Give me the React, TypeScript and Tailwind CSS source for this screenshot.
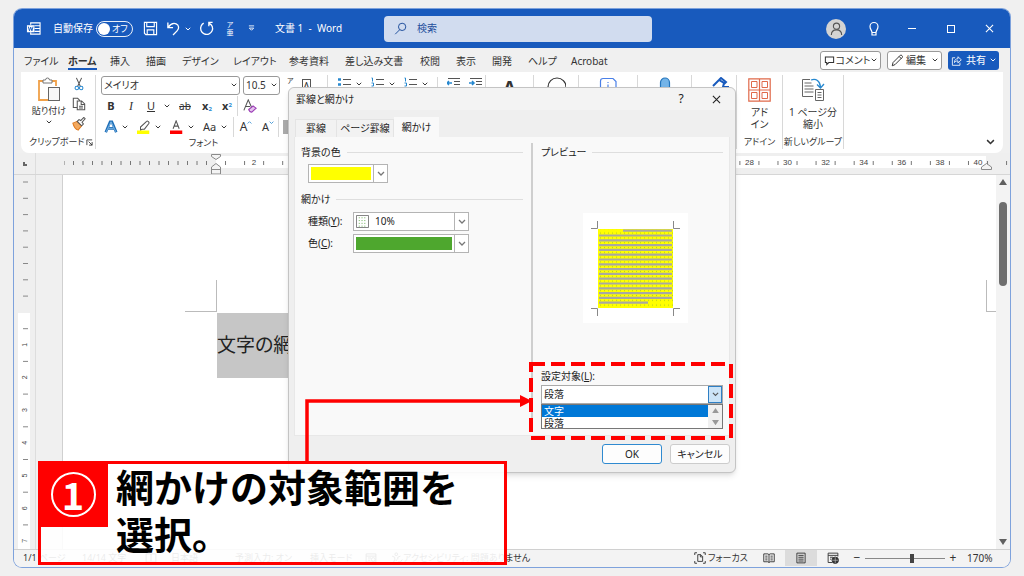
import { useState } from "react";
import type { ReactNode } from "react";
import clsx from "clsx";

const TABS = [
  { name: "ファイル", width: "w-11" },
  { name: "ホーム", width: "w-[42px]" },
  { name: "挿入", width: "w-9" },
  { name: "描画", width: "w-9" },
  { name: "デザイン", width: "w-[51px]" },
  { name: "レイアウト", width: "w-14" },
  { name: "参考資料", width: "w-14" },
  { name: "差し込み文書", width: "w-[75px]" },
  { name: "校閲", width: "w-9" },
  { name: "表示", width: "w-9" },
  { name: "開発", width: "w-9" },
  { name: "ヘルプ", width: "w-[43px]" },
  { name: "Acrobat", width: "w-12" },
];

const TARGETS = ["文字", "段落"];

function Chevron({ className = "w-[7px]" }: { className?: string }) {
  return (
    <svg viewBox="0 0 8 5" className={clsx("shrink-0", className)} fill="none" stroke="currentColor" strokeWidth="1.3">
      <path d="M1 1l3 3 3-3" />
    </svg>
  );
}

function Icon({ size = "size-4", box = 16, children }: { size?: string; box?: number; children: ReactNode }) {
  return (
    <svg viewBox={`0 0 ${box} ${box}`} className={clsx("shrink-0", size)} fill="none" stroke="currentColor" strokeWidth="1.2">
      {children}
    </svg>
  );
}

function TitleBar() {
  return (
    <header className="flex h-[39px] shrink-0 items-center bg-[#185abd] text-[10px] text-white">
      <div className="flex w-[370px] shrink-0 items-center pl-3">
        <Icon size="size-[15px]">
          <path d="M5 4V2h10v12H5v-2M9 5h6M9 8h6M9 11h6" />
          <rect x="1" y="4.5" width="8" height="7.5" fill="#fff" stroke="none" />
          <path d="M2.5 6l1.2 4.5L5 6.5l1.3 4L7.500 6" stroke="#185abd" strokeWidth="1" />
        </Icon>
        <label htmlFor="autosave" className="ml-3 w-[39px] whitespace-nowrap">自動保存</label>
        <div className="ml-1 flex h-4 w-[37px] shrink-0 items-center rounded-full border border-white/90 pl-px">
          <input id="autosave" type="checkbox" role="switch" className="size-3 shrink-0 appearance-none rounded-full bg-white" />
          <span className="ml-0.5 text-[9px] whitespace-nowrap">オフ</span>
        </div>
        <button type="button" aria-label="上書き保存" className="ml-2.5">
          <Icon size="size-[15px]">
            <path d="M1.500 1.500h13v13H3l-1.500-1.500zM4 1.500v4.500h8V1.500M4.500 14.500V9.500h7v5" />
          </Icon>
        </button>
        <button type="button" aria-label="元に戻す" className="ml-2 flex items-center gap-1">
          <Icon size="size-[15px]">
            <path d="M2 1.500v5.500h5.500M2.300 6.700C5 3 8 1.800 10.800 3c3.200 1.500 3.500 5 1 7.500L7.500 15" strokeWidth="1.400" />
          </Icon>
          <Chevron className="w-[6px]" />
        </button>
        <button type="button" aria-label="やり直し" className="ml-2">
          <Icon size="size-[15px]">
            <path d="M10.500 5.500V1.500h4M11 2.500C14 4 15.300 7.500 14 10.500c-1.500 3.300-5.300 4.700-8.500 3.300C2.200 12.300.8 8.500 2.300 5.300 2.900 4 3.800 3 5 2.300" strokeWidth="1.400" />
          </Icon>
        </button>
        <button type="button" aria-label="ふりがな" className="ml-2.5 flex w-3 flex-col items-center text-[7px] leading-[8px]">
          <span>ア</span>
          <span>亜</span>
        </button>
        <button type="button" aria-label="クイック アクセス ツール バーの設定" className="ml-3">
          <svg viewBox="0 0 8 7" className="w-[7px]" fill="none" stroke="currentColor">
            <path d="M1 1h6M1.500 3.500L4 6l2.500-2.500z" />
          </svg>
        </button>
        <span className="ml-5 whitespace-pre text-[10px]">文書 1  -  Word</span>
      </div>
      <label className="flex h-[26px] w-[268px] shrink-0 items-center gap-2.5 rounded-sm bg-[#d1dcef] pl-2.5 text-[#1f4e9c]">
        <Icon size="size-[13px]">
          <circle cx="10" cy="6" r="4.500" />
          <path d="M7 9.500L1.500 15" />
        </Icon>
        <input type="search" aria-label="検索" placeholder="検索" className="min-w-0 flex-1 bg-transparent outline-none placeholder:text-[#1f4e9c]" />
      </label>
      <div className="ml-auto flex items-center pr-[15px]">
        <button type="button" aria-label="アカウント" className="flex size-5 items-center justify-center rounded-full bg-[#d3d3d3] text-[#555]">
          <Icon size="size-[15px]">
            <circle cx="8" cy="5.500" r="3.300" />
            <path d="M2.500 15c0-3.500 2-5.500 5.500-5.500s5.500 2 5.500 5.500" />
          </Icon>
        </button>
        <button type="button" aria-label="ヒント" className="ml-5">
          <Icon>
            <path d="M6 11.500C6 9.500 4 8.500 4 5.500 4 3.300 5.800 1.500 8 1.500s4 1.800 4 4c0 3-2 4-2 6zM6 11.500v2.500h4v-2.500" />
          </Icon>
        </button>
        <button type="button" aria-label="最小化" className="ml-6 flex w-3 justify-center">
          <span className="h-px w-2 bg-white" />
        </button>
        <button type="button" aria-label="最大化" className="ml-[27px] flex w-3 justify-center">
          <span className="size-2 border border-white" />
        </button>
        <button type="button" aria-label="閉じる" className="ml-[26px] flex w-3 justify-center">
          <Icon size="size-[9px]" box={10}><path d="M1 1l8 8M9 1L1 9" /></Icon>
        </button>
      </div>
    </header>
  );
}

function TabRow() {
  const [active, setActive] = useState("ホーム");
  return (
    <div className="flex h-6 shrink-0 items-center bg-[#f0f0f0] pr-[11px] pl-2.5 text-[10px]">
      <nav className="flex">
        {TABS.map((t) => (
          <button
            key={t.name}
            type="button"
            onClick={() => setActive(t.name)}
            className={clsx("shrink-0 text-left whitespace-nowrap", t.width)}
          >
            <span className={clsx("inline-block border-b-2 pt-1 leading-[14px]", active === t.name ? "border-[#185abd] font-bold" : "border-transparent")}>
              {t.name}
            </span>
          </button>
        ))}
      </nav>
      <div className="ml-auto flex gap-1.5">
        <button type="button" className="flex h-[19px] w-[61px] items-center justify-center gap-px rounded-[3px] border border-[#999] bg-white whitespace-nowrap">
          <Icon size="size-[11px]"><path d="M2 3h12v8H7l-3 3v-3H2z" strokeWidth="1.500" /></Icon>
          コメント
          <Chevron className="w-[6px]" />
        </button>
        <button type="button" className="flex h-[19px] w-[55px] items-center justify-center gap-0.5 rounded-[3px] border border-[#999] bg-white whitespace-nowrap">
          <Icon size="size-[13px]"><path d="M1.500 14.500l1-4 9-9c1-1 3.500 1.500 2.500 2.500l-9 9zM10 3l3 3" /></Icon>
          編集
          <Chevron className="ml-1 w-[6px]" />
        </button>
        <button type="button" className="flex h-[19px] w-[51px] items-center justify-center gap-1 rounded-[3px] bg-[#185abd] whitespace-nowrap text-white">
          <Icon size="size-[11px]">
            <path d="M6 4H2v11h11v-4M5 11c0-4 2-5.500 5-5.500V2.500L15 7l-5 4.500V8.500C8 8.500 6.500 9 5 11z" />
          </Icon>
          共有
          <Chevron className="w-[6px]" />
        </button>
      </div>
    </div>
  );
}

function Group({ label, width, children }: { label?: string; width: string; children: ReactNode }) {
  return (
    <section className={clsx("flex shrink-0 flex-col border-r border-[#d8d8d8]", width)}>
      <div className="h-[61px]">{children}</div>
      {label && <div className="text-center text-[9px] leading-[14px] whitespace-nowrap">{label}</div>}
    </section>
  );
}

function Divider() {
  return <span className="h-5 w-px shrink-0 bg-[#d8d8d8]" />;
}

function ClipboardGroup() {
  return (
    <section className="flex w-[75px] shrink-0 flex-col border-r border-[#d8d8d8]">
      <div className="flex h-[61px]">
        <button type="button" className="flex w-12 flex-col items-center pl-2 text-[9px] leading-[14px] whitespace-nowrap">
          <svg viewBox="0 0 24 26" className="mt-0.5 mb-px w-6" fill="none">
            <path d="M6 4H2v19h9M15 4h4v5" stroke="#f0a048" strokeWidth="1.800" />
            <path d="M6 3h2.500a2 2 0 014 0H15v3H6z" stroke="#777" fill="#fff" />
            <rect x="11.500" y="10.500" width="11" height="13" stroke="#666" fill="#f7f7f7" />
          </svg>
          貼り付け
          <Chevron className="mt-0.5 w-[6px]" />
        </button>
        <div className="flex w-5 flex-col items-center gap-1.5 pt-0.5">
          <button type="button" aria-label="切り取り">
            <Icon size="size-[14px]">
              <path d="M5 1l4.500 9.500M11 1L6.500 10.500" stroke="#555" />
              <circle cx="5.500" cy="12.500" r="2" stroke="#2788cf" />
              <circle cx="10.500" cy="12.500" r="2" stroke="#2788cf" />
            </Icon>
          </button>
          <button type="button" aria-label="コピー">
            <Icon size="size-[14px]">
              <path d="M6 12H1.500V1.500h5L9 4M6 4.500h5l3.500 3.500v6.500H6zM10.500 4.500V8.500h4M8 10.500h4.500M8 12.500h4.500" stroke="#555" />
            </Icon>
          </button>
          <button type="button" aria-label="書式のコピー">
            <Icon size="size-[14px]">
              <path d="M1 7l5-2 5 5-4 5c-3-1-5-4-6-8z" fill="#f3a95f" stroke="#e07b20" />
              <path d="M6 5l2-2 2 1 3.500-3.500 1.500 1.500L11.500 6l1.500 2-2 2z" fill="#fff" stroke="#555" />
            </Icon>
          </button>
        </div>
      </div>
      <div className="flex items-center justify-between pr-0.5 pl-2 text-[9px] leading-[14px] whitespace-nowrap">
        クリップボード
        <Icon size="size-[7px]" box={8}><path d="M1 7V1h6M3 3l4 4M7 3.500V7H3.500" strokeWidth="1" /></Icon>
      </div>
    </section>
  );
}

function FontGroup() {
  return (
    <Group label="フォント" width="w-[232px] pr-4">
      <div className="flex flex-col gap-px pl-[5px]">
        <div className="flex items-center gap-[3px]">
          <span className="flex h-[19px] w-[139px] shrink-0 items-center rounded-[3px] border border-[#999] px-0.5">
            <select aria-label="フォント名" className="min-w-0 flex-1 appearance-none bg-transparent text-[10px] outline-none">
              <option>メイリオ</option>
            </select>
            <Chevron className="w-[6px]" />
          </span>
          <span className="flex h-[19px] w-[37px] shrink-0 items-center rounded-[3px] border border-[#999] px-0.5">
            <select aria-label="フォント サイズ" className="min-w-0 flex-1 appearance-none bg-transparent text-[10px] outline-none">
              <option>10.5</option>
            </select>
            <Chevron className="w-[6px]" />
          </span>
          <span className="ml-1 w-3 self-start pt-0.5 text-[7px] leading-[8px]">ア</span>
          <span className="mt-1 ml-1 flex h-4 w-[13px] items-start justify-center border border-[#555] text-[10px] leading-3">A</span>
        </div>
        <div className="flex h-5 items-center text-[11px]">
          <button type="button" className="w-5 font-bold">B</button>
          <button type="button" className="w-5 font-['Liberation_Serif'] text-xs italic">I</button>
          <button type="button" className="w-5 underline">U</button>
          <button type="button" aria-label="下線の種類" className="flex w-3 justify-center"><Chevron className="w-[6px]" /></button>
          <button type="button" className="w-6 text-[10px] line-through">ab</button>
          <button type="button" aria-label="下付き" className="w-5 font-bold">x<sub className="text-[6px] text-[#2788cf]">2</sub></button>
          <button type="button" aria-label="上付き" className="w-5 font-bold">x<sup className="text-[6px] text-[#2788cf]">2</sup></button>
          <Divider />
          <button type="button" aria-label="書式のクリア" className="flex w-6 justify-center">
            <Icon size="size-[14px]">
              <path d="M1 13L6 1l4 9M3 8.500h5" stroke="#555" />
              <path d="M6.500 12l5-4 3.500 2.500-5 4.500c-1.500 0-3-1.500-3.500-3z" fill="#e5c3ee" stroke="#9b3db5" />
            </Icon>
          </button>
        </div>
        <div className="flex h-5 items-center">
          <div className="flex gap-[9px] pl-[3px]">
            <button type="button" aria-label="文字の効果" className="flex w-6 items-center justify-between">
              <Icon size="size-[14px]">
                <path d="M2 14L7 2h2l5 12M4.500 9.500h7" stroke="#1f6fb8" strokeWidth="3" />
                <path d="M2.500 13.500L8 2l5.500 11.500M5 9.500h6" stroke="#9fd0f5" strokeWidth=".8" />
              </Icon>
              <Chevron className="w-[6px]" />
            </button>
            <button type="button" aria-label="蛍光ペンの色" className="flex w-6 items-center justify-between">
              <Icon size="size-[14px]">
                <path d="M4 10V8l7-6.500c1-1 3.500 1 2.500 2.500l-5 6.500H6l-2 1z" stroke="#555" />
                <path d="M0 14h14" stroke="#ff0" strokeWidth="4" />
              </Icon>
              <Chevron className="w-[6px]" />
            </button>
            <button type="button" aria-label="フォントの色" className="flex w-6 items-center justify-between">
              <Icon size="size-[14px]">
                <path d="M3.500 10L7 1l3.500 9M5 7h4" stroke="#555" />
                <path d="M0 14h14" stroke="#f00" strokeWidth="4" />
              </Icon>
              <Chevron className="w-[6px]" />
            </button>
            <button type="button" aria-label="文字種の変換" className="flex w-6 items-center justify-between text-[11px]">
              Aa
              <Chevron className="w-[6px]" />
            </button>
          </div>
          <span className="ml-1.5 flex"><Divider /></span>
          <button type="button" aria-label="フォント サイズの拡大" className="flex w-6 justify-center text-xs">
            A<Chevron className="mt-0.5 w-[5px] rotate-180 self-start text-[#2788cf]" />
          </button>
          <button type="button" aria-label="フォント サイズの縮小" className="flex w-5 justify-center text-[11px]">
            A<Chevron className="mt-0.5 w-[5px] self-start text-[#2788cf]" />
          </button>
          <Divider />
          <span className="ml-1 h-3.5 w-3.5 bg-[#ababab]" />
        </div>
      </div>
    </Group>
  );
}

function ListIcon({ numbered }: { numbered?: boolean }) {
  return (
    <span className="flex w-6 items-center justify-between">
      <svg viewBox="0 0 13 14" className="w-[13px]" fill="none" stroke="#555">
        <path d="M5 2.500h8M5 7.500h8M5 12.500h8" />
        <path d={numbered ? "M.5 1h1v3.500M.5 6h2v3h-2M.5 11h2v3" : "M0 2.500h3M0 7.500h3M0 12.500h3"} stroke="#2788cf" strokeWidth={numbered ? 1 : 2.500} />
      </svg>
      <Chevron className="w-[6px]" />
    </span>
  );
}

function IndentIcon({ flip }: { flip?: boolean }) {
  return (
    <svg viewBox="0 0 13 14" className="w-[13px]" fill="none" stroke="#555">
      <path d="M1 1.500h12M7 4.500h6M7 7.500h6M1 11.500h12" />
      <path d={flip ? "M0 6h5M3 4l2 2-2 2" : "M5 6H0M2 4L0 6l2 2"} stroke="#2788cf" strokeWidth="1.500" />
    </svg>
  );
}

function Ribbon() {
  return (
    <div className="mx-[7px] flex h-[81px] shrink-0 rounded-b-lg bg-white pt-[3px] pb-1 text-[#333]">
      <ClipboardGroup />
      <FontGroup />
      <Group width="w-[158px]">
        <div className="flex items-start gap-[9px] pt-0.5 pl-2.5">
          <ListIcon />
          <ListIcon numbered />
          <ListIcon numbered />
          <Divider />
          <IndentIcon />
          <IndentIcon flip />
        </div>
      </Group>
      <Group width="w-12">
        <div className="text-center text-lg leading-6 font-bold">A</div>
      </Group>
      <Group width="w-[45px]">
        <Icon size="mx-auto mt-0.5 size-5" box={20}><circle cx="11" cy="10" r="9" /></Icon>
      </Group>
      <Group width="w-[59px]">
        <Icon size="mx-auto mt-0.5 size-5" box={20}>
          <path d="M2.500 12V4q0-2.500 2.500-2.500h10l3 3V14M10 5v1M10 7.500v4" stroke="#4a80e8" />
        </Icon>
      </Group>
      <Group width="w-[54px]">
        <Icon size="mx-auto mt-0.5 size-5" box={20}>
          <rect x="5.500" y="1" width="9" height="14" rx="4.500" fill="#74b4e8" stroke="#2576bd" />
        </Icon>
      </Group>
      <Group width="w-[45px]">
        <Icon size="ml-5 mt-0.5 size-5" box={20}>
          <path d="M1 9l6-6 5 3-1 4h6M7 3l2-2 5 4-2 2" stroke="#185abd" strokeWidth="2" />
        </Icon>
      </Group>
      <Group width="w-[46px]" label="アドイン">
        <button type="button" className="flex w-full flex-col items-center text-[10px] leading-3">
          <svg viewBox="0 0 23 24" className="mt-[3px] mb-1 w-[23px]" fill="none" stroke="#e0694a">
            <path d="M.8.8h21.400v22.400H.8zM11.500.8v22.400M.8 12h21.400" strokeWidth="1.200" />
            <path d="M3.500 3.500h5.500v6H3.500zM14 3.500h5.500v6H14zM3.500 14.500h5.500v6H3.500zM14 14.500h5.500v6H14z" />
          </svg>
          アド
          <br />
          イン
        </button>
      </Group>
      <Group width="w-[61px]" label="新しいグループ">
        <button type="button" className="flex w-full flex-col items-center text-[10px] leading-3 whitespace-nowrap">
          <svg viewBox="0 0 24 24" className="mt-[3px] mb-1 w-6" fill="none" stroke="#666">
            <path d="M9 1.500H1.500v17H12M3.500 5h7M3.500 8h9M3.500 11h9M3.500 14h9" />
            <path d="M14.500 11.500h8v11h-8zM16.500 14.500h4M16.500 17h4M16.500 19.500h4" />
            <path d="M10 2c5-2 9 1 9.500 7M16 6.500l3.500 3.500L23 6" stroke="#2788cf" strokeWidth="1.300" />
          </svg>
          1 ページ分
          <br />
          縮小
        </button>
      </Group>
      <button type="button" aria-label="リボンを折りたたむ" className="mt-auto mr-2 mb-1 ml-auto">
        <Chevron className="w-[9px]" />
      </button>
    </div>
  );
}

// Horizontal ruler: one character is 19.05px, zero sits on the left margin.
function HorizontalRuler() {
  const unit = 19.05;
  const left = Array.from({ length: 16 }, (_, i) => 152 - (i + 1) * 9.500);
  const right = Array.from({ length: 42 }, (_, i) => 152 + (i + 0.5) * unit);
  const numbers = Array.from({ length: 20 }, (_, i) => (i + 1) * 2);
  return (
    <div className="flex h-[22px] shrink-0 overflow-hidden border-b border-[#d6d6d6] bg-[#efefef]">
      <div className="flex w-[22px] shrink-0 items-center justify-center border-r border-[#ddd]">
        <span className="size-1 border-b-2 border-l-2 border-[#666]" />
      </div>
      <svg viewBox="0 0 960 22" className="ml-7 h-[22px] w-[960px] shrink-0" fill="none">
        <rect x="152" y="3" width="770" height="12" fill="#fff" />
        {[...left, ...right].map((x) => (
          <path key={x} d={`M${x} 8v4`} stroke="#777" />
        ))}
        {numbers.map((n) => (
          <text key={n} x={152 + n * unit} y="12" fontSize="8" textAnchor="middle" fill="#444" className="font-['Liberation_Sans']">
            {n}
          </text>
        ))}
        <path d="M147.500 1.500h9v2l-4.500 3-4.500-3zM152 10.500l4.500 3.500v7h-9v-7zM147.500 16.500h9" fill="#f4f4f4" stroke="#8a8a8a" />
        <path d="M922.500 10.500l5 3.500v2.500h-10V14z" fill="#f4f4f4" stroke="#8a8a8a" />
      </svg>
    </div>
  );
}

function VerticalRuler() {
  const ticks = Array.from({ length: 8 }, (_, i) => 7 + i * 16.300);
  return (
    <div className="w-[22px] shrink-0 overflow-hidden border-r border-[#ddd] bg-[#efefef]">
      <svg viewBox="0 0 20 374" className="h-[374px] w-5" fill="none">
        <rect x="4" y="138" width="12" height="240" fill="#fff" />
        {ticks.map((y) => (
          <path key={y} d={`M9 ${y}h5`} stroke="#888" />
        ))}
        {[1, 2, 3, 4, 5, 6, 7].map((n) => (
          <g key={n}>
            <path d={`M9 ${137 + n * 32.700 - 16}h5`} stroke="#888" />
            <text fontSize="7" fill="#444" textAnchor="middle" transform={`translate(13 ${137 + n * 32.700}) rotate(-90)`} className="font-['Liberation_Sans']">
              {n}
            </text>
          </g>
        ))}
      </svg>
    </div>
  );
}

function DocumentArea() {
  return (
    <div className="flex min-h-0 flex-1">
      <VerticalRuler />
      <main className="ml-[26px] flex-1 overflow-hidden border-l border-[#d0d0d0] bg-white pt-[105px]">
        <div className="flex h-8 justify-between">
          <span className="ml-[122px] w-8 border-r border-b border-[#bbb]" />
          <span className="w-2.5 border-b border-l border-[#bbb]" />
        </div>
        <p className="mt-px ml-[154px] h-[65px] w-48 bg-[#c6c6c6] text-[19px] leading-[64px] text-[#222]">文字の網かけ</p>
      </main>
      <div className="flex w-3.5 shrink-0 flex-col items-center bg-[#f3f3f3] py-1">
        <svg viewBox="0 0 8 6" className="w-2" fill="#606060"><path d="M4 0l4 6H0z" /></svg>
        <span className="mt-[17px] h-[84px] w-2 rounded-full bg-[#6e6e6e]" />
        <svg viewBox="0 0 8 6" className="mt-auto w-2" fill="#606060"><path d="M4 6l4-6H0z" /></svg>
      </div>
    </div>
  );
}

function StatusBar() {
  const [zoom, setZoom] = useState(59);
  return (
    <footer className="flex h-[18px] shrink-0 items-center border-t border-[#d0d0d0] bg-[#f3f3f3] pr-[15px] pb-px pl-[9px] text-[9px] whitespace-nowrap text-[#333]">
      <span className="w-[59px]">1/1 ページ</span>
      <span className="w-[63px]">14/14 文字</span>
      <span className="w-[26px]"><Icon size="size-3"><path d="M1.500 2.500h5L8 4l1.500-1.500h5v11h-13zM8 4v8" /></Icon></span>
      <span className="w-16">日本語</span>
      <span className="w-[75px]">予測入力: オン</span>
      <span className="w-[55px]">挿入モード</span>
      <span className="w-[26px]"><Icon size="size-3"><path d="M1.500 2.500h13v11h-13zM1.500 5.500h13M4 8h4M4 11h3" /><circle cx="11" cy="10" r="2.500" /></Icon></span>
      <Icon size="size-3">
        <circle cx="7" cy="3" r="1.800" />
        <path d="M1.500 5.500L5 7v3l-2 4.500M12.500 5.500L9 7v3M7 10v2M10 12l2 2 3-4" />
      </Icon>
      <span>アクセシビリティ: 問題ありません</span>
      <div className="ml-auto flex h-full items-center">
        <button type="button" className="flex w-[59px] items-center gap-0.5">
          <Icon size="size-3">
            <path d="M1 4V1h3M12 1h3v3M15 12v3h-3M4 15H1v-3M5 3.500h4l2.500 2.500v6.500H5zM8.500 3.500v3h3" strokeWidth="1.200" />
          </Icon>
          フォーカス
        </button>
        <button type="button" aria-label="閲覧モード" className="flex w-8 justify-center">
          <Icon size="size-3"><path d="M1 2.500h5.500L8 3.500l1.500-1h5.500v10.500H9.500L8 14l-1.500-1H1zM8 3.500V14M3 5.500h3M3 8h3M3 10.500h3M10 5.500h3M10 8h3M10 10.500h3" /></Icon>
        </button>
        <button type="button" aria-label="印刷レイアウト" className="flex h-full w-8 items-center justify-center bg-[#dcdcdc]">
          <Icon size="size-3"><path d="M2.500 1.500h11v13h-11zM4.500 4.500h7M4.500 7h7M4.500 9.500h7M4.500 12h7" /></Icon>
        </button>
        <button type="button" aria-label="Web レイアウト" className="flex w-8 justify-center">
          <Icon size="size-3">
            <path d="M7 14H1.500V1.500h13V6M1.500 4.500h13M4 7h4M4 9.500h2" />
            <circle cx="11" cy="11" r="4.300" fill="#333" />
            <path d="M7 11h8M11 7v8" stroke="#ccc" strokeWidth=".8" />
          </Icon>
        </button>
        <button type="button" className="w-4 text-xs">−</button>
        <input
          type="range"
          aria-label="ズーム"
          value={zoom}
          onChange={(e) => setZoom(Number(e.target.value))}
          className="h-3 w-20 appearance-none bg-transparent [&::-webkit-slider-runnable-track]:h-px [&::-webkit-slider-runnable-track]:bg-[#888] [&::-webkit-slider-thumb]:-mt-1 [&::-webkit-slider-thumb]:h-[9px] [&::-webkit-slider-thumb]:w-1 [&::-webkit-slider-thumb]:appearance-none [&::-webkit-slider-thumb]:bg-[#444]"
        />
        <button type="button" className="w-4 text-xs">+</button>
        <span className="ml-1.5 w-7 text-[10px]">170%</span>
      </div>
    </footer>
  );
}

function SectionTitle({ children }: { children: ReactNode }) {
  return (
    <h3 className="flex items-center gap-1.5 text-[10px] leading-4 whitespace-nowrap">
      {children}
      <span className="h-px flex-1 bg-[#dedede]" />
    </h3>
  );
}

function Combo({ id, width, fill, label, children }: { id: string; width: string; fill?: string; label?: string; children?: ReactNode }) {
  return (
    <span className={clsx("flex h-[19px] items-stretch border border-[#b4b4b4] bg-white", width)}>
      {children}
      <select id={id} aria-label={label} className={clsx("min-w-0 flex-1 appearance-none text-[10px] outline-none", fill ? `m-0.5 ${fill}` : "pl-1")}>
        <option>{fill ? "" : "10%"}</option>
      </select>
      <span className="flex w-3.5 items-center justify-center border-l border-[#b4b4b4] text-[#777]">
        <Chevron className="w-[8px]" />
      </span>
    </span>
  );
}

function Preview() {
  const bars = Array.from({ length: 14 }, (_, i) => 22.500 + i * 4.800);
  return (
    <svg viewBox="0 0 105 110" className="w-[105px] bg-white" fill="none">
      <defs>
        <pattern id="dots" x="16" y="17.700" width="4" height="4.800" patternUnits="userSpaceOnUse">
          <rect x="1" y="1.800" width="1" height="1.200" fill="#b9d21a" />
        </pattern>
      </defs>
      <rect x="15" y="16" width="75" height="79" fill="#ff0" />
      <rect x="15" y="16" width="75" height="79" fill="url(#dots)" />
      <path d="M40 17.700h49M16 89.700h49" stroke="#a9a9a0" strokeWidth="2.200" />
      {bars.map((y) => (
        <path key={y} d={`M16 ${y}h73`} stroke="#a9a9a0" strokeWidth="2.200" />
      ))}
      <path d="M8 15.500h6.500V8M97 15.500h-6.500V8M8 95.500h6.500v7.500M97 95.500h-6.500v7.500" stroke="#888" />
    </svg>
  );
}

function TargetPicker() {
  const [target, setTarget] = useState("段落");
  return (
    <div className="w-[182px] text-[10px]">
      <label htmlFor="target" className="leading-[18px]">設定対象(<u>L</u>):</label>
      <div className="flex h-[19px] border border-[#aaa] bg-white">
        <select
          id="target"
          value={target}
          onChange={(e) => setTarget(e.target.value)}
          className="min-w-0 flex-1 appearance-none pl-0.5 outline-none"
        >
          {TARGETS.map((t) => (
            <option key={t}>{t}</option>
          ))}
        </select>
        <span className="flex w-3.5 items-center justify-center border border-[#2f7fc4] bg-[#cce4f7] text-[#555]"><Chevron className="w-[7px]" /></span>
      </div>
      <div className="flex h-[25px] border border-[#777] bg-white">
        <ul role="listbox" aria-label="設定対象" className="flex-1 leading-3">
          <li role="option" aria-selected="true" className="h-3 bg-[#0078d7] pl-0.5 text-white">文字</li>
          <li role="option" aria-selected="false" className="h-3 pl-0.5">段落</li>
        </ul>
        <div className="flex w-3.5 flex-col items-center justify-around bg-[#f0f0f0]">
          <svg viewBox="0 0 8 6" className="w-[7px]" fill="#999"><path d="M4 0l4 6H0z" /></svg>
          <svg viewBox="0 0 8 6" className="w-[7px]" fill="#999"><path d="M4 6l4-6H0z" /></svg>
        </div>
      </div>
    </div>
  );
}

function ShadingDialog() {
  return (
    <div
      role="dialog"
      aria-label="罫線と網かけ"
      className="absolute top-[87px] left-[288px] flex h-[386px] w-[448px] flex-col rounded-md border border-[#c4c4c4] bg-[#efefef] text-[10px] text-[#222] shadow-md"
    >
      <div className="flex h-[22px] shrink-0 items-center rounded-t-md bg-[#f3f3f3] pl-[7px]">
        <h2>罫線と網かけ</h2>
        <button type="button" className="ml-auto w-5 text-xs">?</button>
        <button type="button" aria-label="閉じる" className="mr-3.5 ml-5 flex w-2.5 justify-center">
          <Icon size="size-[9px]" box={10}><path d="M1 1l8 8M9 1L1 9" /></Icon>
        </button>
      </div>
      <div role="tablist" className="mt-[7px] flex h-5 shrink-0 items-end pl-1.5">
        <button role="tab" type="button" className="h-[18px] w-[42px] border border-b-0 border-[#e4e4e4] bg-[#f2f2f2]">罫線</button>
        <button role="tab" type="button" className="h-[18px] w-[57px] border border-b-0 border-l-0 border-[#e4e4e4] bg-[#f2f2f2] whitespace-nowrap">ページ罫線</button>
        <button role="tab" type="button" aria-selected="true" className="h-5 w-[45px] bg-[#f9f9f9] whitespace-nowrap">網かけ</button>
      </div>
      <div className="mx-[5px] flex h-[299px] shrink-0 border border-t-0 border-[#e8e8e8] bg-[#f9f9f9] pt-1.5">
        <div className="w-[236px] pt-px pr-2 pl-1.5">
          <SectionTitle>背景の色</SectionTitle>
          <div className="mt-1 pl-[7px]"><Combo id="back" width="w-20" fill="bg-[#ffff00]" label="背景の色" /></div>
          <div className="mt-2"><SectionTitle>網かけ</SectionTitle></div>
          <div className="mt-[5px] grid grid-cols-[45px_116px] items-center gap-y-[3px] pl-[7px]">
            <label htmlFor="pattern">種類(<u>Y</u>):</label>
            <Combo id="pattern" width="w-[116px]">
              <svg viewBox="0 0 14 14" className="m-0.5 w-[13px]" fill="none">
                <path d="M.5.5h13v13H.5z" stroke="#777" fill="#fff" />
                <path d="M3 3h9M3 6h9M3 9h9M3 12h9" stroke="#5da845" strokeDasharray="1 2" />
              </svg>
            </Combo>
            <label htmlFor="color">色(<u>C</u>):</label>
            <Combo id="color" width="w-[116px]" fill="bg-[#4ea72e]" />
          </div>
        </div>
        <div className="mb-1.5 w-0.5 bg-[#cfcfcf]" />
        <div className="flex flex-1 flex-col pt-px pr-1.5 pl-2">
          <SectionTitle>プレビュー</SectionTitle>
          <div className="mt-[53px] flex justify-center pl-1.5"><Preview /></div>
          <div className="mt-auto mb-1.5"><TargetPicker /></div>
        </div>
      </div>
      <div className="flex flex-1 items-center justify-end gap-2 pr-[5px]">
        <button type="button" className="h-5 w-[60px] rounded-[3px] border border-[#2f8ad0] bg-[#fdfdfd]">OK</button>
        <button type="button" className="h-5 w-[60px] rounded-[3px] border border-[#ccc] bg-[#fdfdfd] whitespace-nowrap">キャンセル</button>
      </div>
    </div>
  );
}

// Red guide marks that lie over the window: dashed frame, arrow and caption.
function Annotations() {
  return (
    <>
      <svg viewBox="0 0 440 110" className="pointer-events-none absolute top-[360px] left-[300px] w-[440px]" fill="none" stroke="#f00" strokeWidth="4">
        <rect x="231" y="4" width="200" height="74" strokeDasharray="14 6" />
        <path d="M7 103V41h215" strokeWidth="3.500" />
        <path d="M220 35l12 6-12 6z" fill="#f00" stroke="none" />
      </svg>
      <div className="absolute top-[461px] left-[38px] flex h-[104px] w-[469px] border-3 border-[#ff0000] bg-white/90 text-black">
        <div className="-mt-[3px] -ml-[3px] flex h-[66px] w-[70px] shrink-0 items-center justify-center bg-[#ff0000]">
          <span className="flex size-[45px] items-center justify-center rounded-full border-2 border-white font-['Noto_Sans_CJK_JP'] text-[38px] leading-10 font-bold text-white">1</span>
        </div>
        <p className="pl-2 text-[38px] leading-[47px] font-bold whitespace-nowrap [font-feature-settings:normal]">
          網かけの対象範囲を
          <br />
          選択。
        </p>
      </div>
    </>
  );
}

export default function App() {
  return (
    <div className="relative flex h-screen min-h-[576px] flex-col bg-[#f0f0f0] pt-[9px] pr-[14px] pb-[9px] pl-[14px] font-['Noto_Sans','Noto_Sans_CJK_JP',sans-serif] text-[#333] [font-feature-settings:'palt']">
      <div className="flex flex-1 flex-col overflow-hidden rounded-lg bg-[#f0f0f0] ring-1 ring-[#7ea2dc]">
        <TitleBar />
        <TabRow />
        <Ribbon />
        <HorizontalRuler />
        <DocumentArea />
        <StatusBar />
      </div>
      <ShadingDialog />
      <Annotations />
    </div>
  );
}
